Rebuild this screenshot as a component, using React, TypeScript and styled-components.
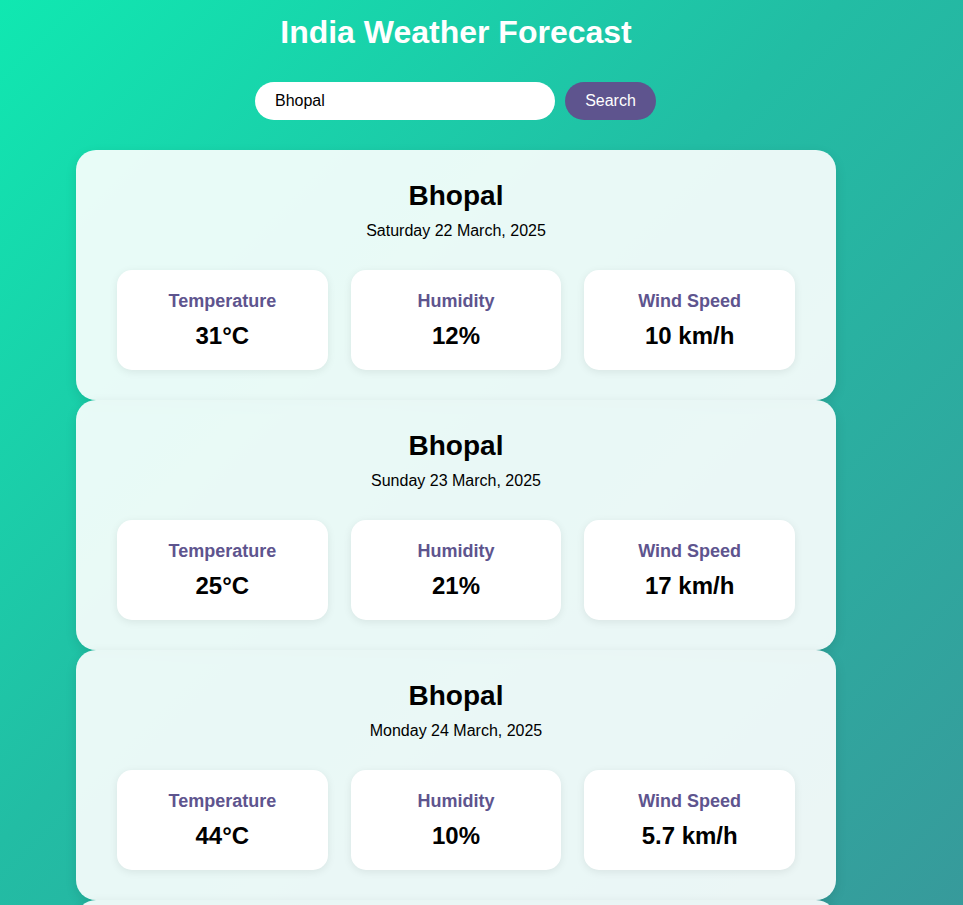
import { useState } from "react";
import styled, { createGlobalStyle } from "styled-components";

const GlobalStyle = createGlobalStyle`
  html, body {
    margin: 0;
    padding: 0;
  }
  body {
    min-height: 100vh;
    font-family: "Liberation Sans", Arial, sans-serif;
    background: linear-gradient(135deg, #10e8b1 0%, #22bda4 45%, #379a9b 100%);
    background-attachment: fixed;
  }
`;

const Page = styled.div`
  width: 912px;
  display: flex;
  flex-direction: column;
  align-items: center;
  padding-top: 14px;
`;

const Title = styled.h1`
  margin: 0;
  font-size: 32px;
  line-height: 37px;
  font-weight: bold;
  color: #ffffff;
`;

const SearchBar = styled.form`
  display: flex;
  gap: 10px;
  margin-top: 31px;
  margin-bottom: 30px;
  margin-right: 1px;
`;

const SearchInput = styled.input`
  width: 300px;
  height: 38px;
  box-sizing: border-box;
  border: none;
  border-radius: 20px;
  padding: 0 20px;
  font-family: "Liberation Sans", Arial, sans-serif;
  font-size: 16px;
  color: #000;
  background: #ffffff;
  outline: none;
`;

const SearchBtn = styled.button`
  width: 91px;
  height: 38px;
  border: none;
  border-radius: 20px;
  background: #5e548e;
  color: #ffffff;
  font-family: "Liberation Sans", Arial, sans-serif;
  font-size: 16px;
  cursor: pointer;
`;

const CardList = styled.div`
  display: flex;
  flex-direction: column;
`;

const Card = styled.div`
  width: 760px;
  box-sizing: border-box;
  padding: 30px 41px;
  border-radius: 20px;
  background: rgba(255, 255, 255, 0.9);
  box-shadow: 0 4px 12px rgba(0, 0, 0, 0.1);
  display: flex;
  flex-direction: column;
  align-items: center;
`;

const City = styled.h2`
  margin: 0;
  font-size: 28px;
  line-height: 32px;
  font-weight: bold;
  color: #000;
`;

const DateText = styled.p`
  margin: 10px 0 0;
  font-size: 16px;
  line-height: 18px;
  color: #000;
`;

const StatGrid = styled.div`
  align-self: stretch;
  display: grid;
  grid-template-columns: repeat(3, 1fr);
  gap: 23px;
  margin-top: 30px;
`;

const StatBox = styled.div`
  height: 100px;
  box-sizing: border-box;
  padding-top: 20px;
  border-radius: 15px;
  background: #ffffff;
  box-shadow: 0 2px 8px rgba(0, 0, 0, 0.08);
  display: flex;
  flex-direction: column;
  align-items: center;
`;

const StatLabel = styled.h3`
  margin: 0;
  font-size: 18px;
  line-height: 22px;
  font-weight: bold;
  color: #5e548e;
`;

const StatValue = styled.p`
  margin: 10px 0 0;
  font-size: 24px;
  line-height: 28px;
  font-weight: bold;
  color: #000;
`;

const forecast = [
  { date: "Saturday 22 March, 2025", temp: "31°C", humidity: "12%", wind: "10 km/h" },
  { date: "Sunday 23 March, 2025", temp: "25°C", humidity: "21%", wind: "17 km/h" },
  { date: "Monday 24 March, 2025", temp: "44°C", humidity: "10%", wind: "5.7 km/h" },
  { date: "Tuesday 25 March, 2025", temp: "38°C", humidity: "15%", wind: "12 km/h" },
];

const App = () => {
  const [city, setCity] = useState("Bhopal");

  return (
    <>
      <GlobalStyle />
      <Page>
        <Title>India Weather Forecast</Title>
        <SearchBar onSubmit={(e) => e.preventDefault()}>
          <SearchInput
            type="text"
            value={city}
            onChange={(e) => setCity(e.target.value)}
          />
          <SearchBtn type="submit">Search</SearchBtn>
        </SearchBar>
        <CardList>
          {forecast.map((day) => (
            <Card key={day.date}>
              <City>Bhopal</City>
              <DateText>{day.date}</DateText>
              <StatGrid>
                <StatBox>
                  <StatLabel>Temperature</StatLabel>
                  <StatValue>{day.temp}</StatValue>
                </StatBox>
                <StatBox>
                  <StatLabel>Humidity</StatLabel>
                  <StatValue>{day.humidity}</StatValue>
                </StatBox>
                <StatBox>
                  <StatLabel>Wind Speed</StatLabel>
                  <StatValue>{day.wind}</StatValue>
                </StatBox>
              </StatGrid>
            </Card>
          ))}
        </CardList>
      </Page>
    </>
  );
};

export default App;
